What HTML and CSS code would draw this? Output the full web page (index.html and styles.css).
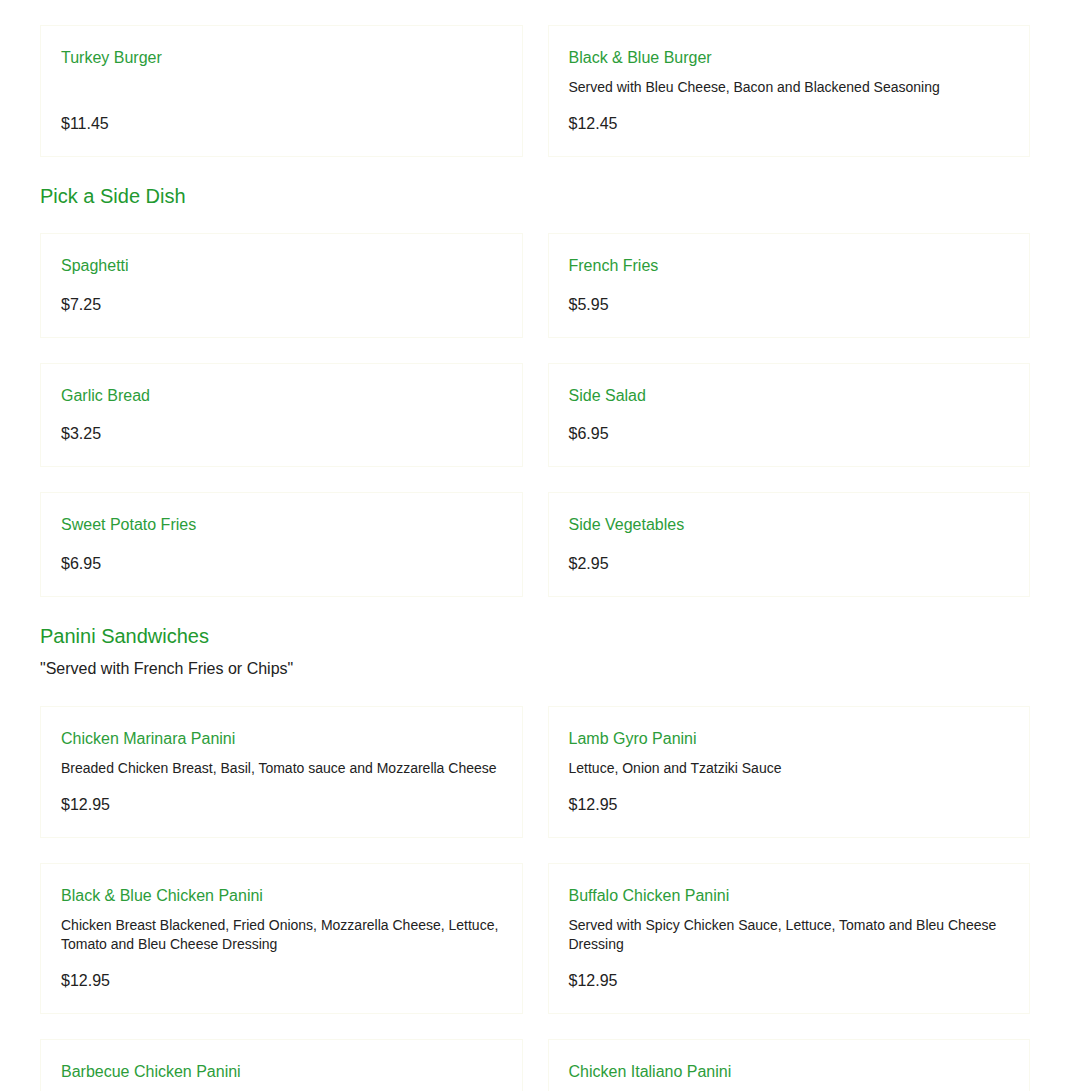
FILE: index.html
```html
<!DOCTYPE html>
<html lang="en">
<head>
<meta charset="utf-8">
<title>Menu</title>
<link rel="stylesheet" href="styles.css">
</head>
<body>
<main class="menu">
  <div class="grid">
    <div class="card-stub"></div>
    <div class="card-stub"></div>
    <article class="card"><h3 class="name">Turkey Burger</h3><p class="desc">&nbsp;</p><p class="price">$11.45</p></article>
    <article class="card"><h3 class="name">Black &amp; Blue Burger</h3><p class="desc">Served with Bleu Cheese, Bacon and Blackened Seasoning</p><p class="price">$12.45</p></article>
  </div>

  <section class="section">
    <header class="section-head"><h2 class="section-title">Pick a Side Dish</h2></header>
    <div class="grid">
      <article class="card"><h3 class="name">Spaghetti</h3><p class="price">$7.25</p></article>
      <article class="card"><h3 class="name">French Fries</h3><p class="price">$5.95</p></article>
      <article class="card"><h3 class="name">Garlic Bread</h3><p class="price">$3.25</p></article>
      <article class="card"><h3 class="name">Side Salad</h3><p class="price">$6.95</p></article>
      <article class="card"><h3 class="name">Sweet Potato Fries</h3><p class="price">$6.95</p></article>
      <article class="card"><h3 class="name">Side Vegetables</h3><p class="price">$2.95</p></article>
    </div>
  </section>

  <section class="section">
    <header class="section-head"><h2 class="section-title">Panini Sandwiches</h2><p class="section-sub">"Served with French Fries or Chips"</p></header>
    <div class="grid">
      <article class="card"><h3 class="name">Chicken Marinara Panini</h3><p class="desc">Breaded Chicken Breast, Basil, Tomato sauce and Mozzarella Cheese</p><p class="price">$12.95</p></article>
      <article class="card"><h3 class="name">Lamb Gyro Panini</h3><p class="desc">Lettuce, Onion and Tzatziki Sauce</p><p class="price">$12.95</p></article>
      <article class="card"><h3 class="name">Black &amp; Blue Chicken Panini</h3><p class="desc">Chicken Breast Blackened, Fried Onions, Mozzarella Cheese, Lettuce, Tomato and Bleu Cheese Dressing</p><p class="price">$12.95</p></article>
      <article class="card"><h3 class="name">Buffalo Chicken Panini</h3><p class="desc">Served with Spicy Chicken Sauce, Lettuce, Tomato and Bleu Cheese Dressing</p><p class="price">$12.95</p></article>
      <article class="card"><h3 class="name">Barbecue Chicken Panini</h3><p class="desc">Chicken Breast, Barbecue Sauce, Onions and Cheddar Cheese</p><p class="price">$12.95</p></article>
      <article class="card"><h3 class="name">Chicken Italiano Panini</h3><p class="desc">Chicken Breast, Roasted Peppers, Pesto and Mozzarella Cheese</p><p class="price">$12.95</p></article>
    </div>
  </section>
</main>
</body>
</html>
```

FILE: styles.css
```css
* { box-sizing: border-box; }

html, body {
  margin: 0;
  padding: 0;
  background: #ffffff;
}

body {
  font-family: "Liberation Sans", Arial, sans-serif;
  color: #222222;
}

.menu {
  padding: 0 40px 40px;
  margin-top: -1px;
}

.grid {
  display: grid;
  grid-template-columns: 1fr 1fr;
  column-gap: 25px;
  row-gap: 25px;
  margin-bottom: 25px;
}

.card-stub {
  height: 1px;
  border-bottom: 1px solid #f9f9ee;
}

.card {
  border: 1px solid #f9f9ee;
  background: #ffffff;
  padding: 20px;
  display: flex;
  flex-direction: column;
}

.name {
  margin: 0;
  font-size: 16px;
  font-weight: normal;
  line-height: 24px;
  color: #2c9d3a;
}

.desc {
  margin: 8px 0 0;
  font-size: 14px;
  line-height: 19px;
  color: #222222;
}

.price {
  margin: 15px 0 0;
  font-size: 16px;
  line-height: 24px;
  color: #222222;
}

.name + .price {
  margin-top: 14.5px;
}

.section-head {
  display: flex;
  flex-direction: column;
  margin-bottom: 23px;
}

.section-title {
  margin: 0;
  font-size: 20px;
  font-weight: normal;
  line-height: 28px;
  color: #22992f;
}

.section-sub {
  margin: 7px 0 2px;
  font-size: 16px;
  line-height: 24px;
  color: #222222;
}
```
